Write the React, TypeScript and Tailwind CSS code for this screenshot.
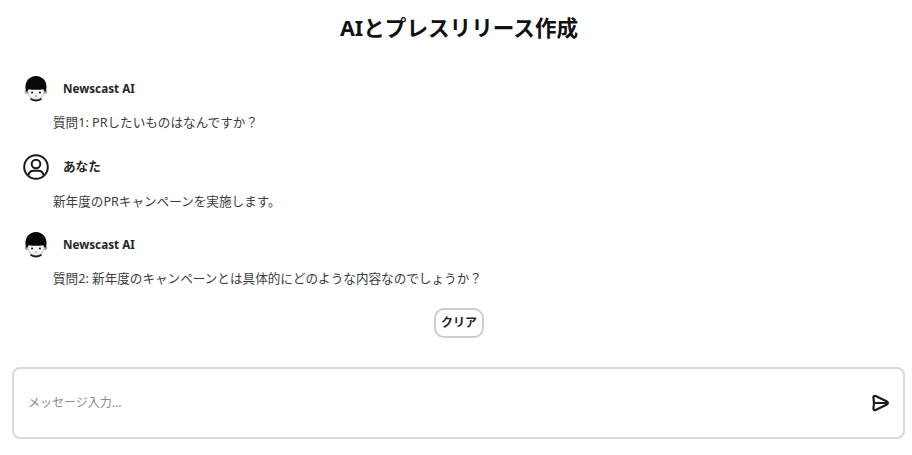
const font = { fontFamily: '"Noto Sans", "Noto Sans CJK JP", sans-serif' };

function Avatar() {
  return (
    <svg width="28" height="28" viewBox="0 0 28 28" className="shrink-0">
      <path d="M8 24.5 Q14 28.5 20 24.5 L18 21 H10 Z" fill="#1a1a1a" />
      <circle cx="4.6" cy="17" r="2" fill="#aaa" />
      <circle cx="23.4" cy="17" r="2" fill="#aaa" />
      <ellipse cx="14" cy="17" rx="8.2" ry="7.4" fill="#f6f6f6" stroke="#888" strokeWidth="0.5" />
      <path d="M4 16.5 C1.4 6 8 1 14 1 C20 1 26.6 6 24 16.5 L22.6 16.5 C22.4 15.4 22 14.6 21.4 14.2 C17 15 11 15 6.6 14.2 C6 14.6 5.6 15.4 5.4 16.5 Z" fill="#080808" />
      <rect x="9" y="16.4" width="2.2" height="2.2" rx="1" fill="#222" />
      <rect x="16.8" y="16.4" width="2.2" height="2.2" rx="1" fill="#222" />
      <path d="M12.5 21 H15.5" stroke="#777" strokeWidth="0.7" />
    </svg>
  );
}

function UserIcon() {
  return (
    <svg width="28" height="28" viewBox="0 0 28 28" fill="none" stroke="#1a1a1a" strokeWidth="2" className="shrink-0">
      <circle cx="14" cy="14" r="11.8" />
      <circle cx="14" cy="11" r="4.3" />
      <path d="M6.3 22.5 C7 19.2 9.5 17.8 11.5 17.8 H16.5 C18.5 17.8 21 19.2 21.7 22.5" />
    </svg>
  );
}

function Message({ ai, name, text, top, gap }: { ai?: boolean; name: string; text: string; top: string; gap: string }) {
  return (
    <div className={top}>
      <div className="flex items-center h-7 gap-[13px] pl-[22px]">
        {ai ? <Avatar /> : <UserIcon />}
        <span className={`font-bold text-[#262626] ${ai ? "text-[11.7px]" : "text-[12.6px]"}`}>{name}</span>
      </div>
      <p className={`pl-[53px] ${gap} text-[12.6px] leading-[20px] text-[#3c3c3c]`}>{text}</p>
    </div>
  );
}

export default function App() {
  return (
    <div className="w-[912px] h-[455px] bg-white overflow-hidden" style={font}>
      <h1 className="pt-[14px] pl-[6px] text-center text-[21.6px] leading-[28px] font-bold text-[#111]">AIとプレスリリース作成</h1>
      <Message ai name="Newscast AI" text="質問1: PRしたいものはなんですか？" top="mt-[33px]" gap="mt-[10px]" />
      <Message name="あなた" text="新年度のPRキャンペーンを実施します。" top="mt-[20px]" gap="mt-[11px]" />
      <Message ai name="Newscast AI" text="質問2: 新年度のキャンペーンとは具体的にどのような内容なのでしょうか？" top="mt-[19px]" gap="mt-[10px]" />
      <div className="flex justify-center mt-[19px] pl-[6px]">
        <button className="w-[50px] h-[30px] rounded-[10px] border-2 border-[#cdcdcd] bg-white text-[12px] font-bold text-[#222]">クリア</button>
      </div>
      <div className="mx-[12px] mt-[29px] w-[893px] h-[72px] rounded-[8px] border-2 border-[#d9d9d9] flex items-center justify-between pl-[14px] pr-[13px]">
        <span className="text-[12px] text-[#8a8a8a]">メッセージ入力...</span>
        <svg width="20" height="20" viewBox="0 0 20 20" fill="none" stroke="#1c1c1c" strokeWidth="2.2" strokeLinejoin="round" strokeLinecap="round">
          <path d="M3.4 4.4 C3.4 3 4.5 2.6 5.6 3 L17 8.6 C18.2 9.3 18.2 10.7 17 11.4 L5.6 17 C4.5 17.4 3.4 17 3.4 15.6 L4 10 Z" />
          <path d="M4 10 H16.5" />
        </svg>
      </div>
    </div>
  );
}
